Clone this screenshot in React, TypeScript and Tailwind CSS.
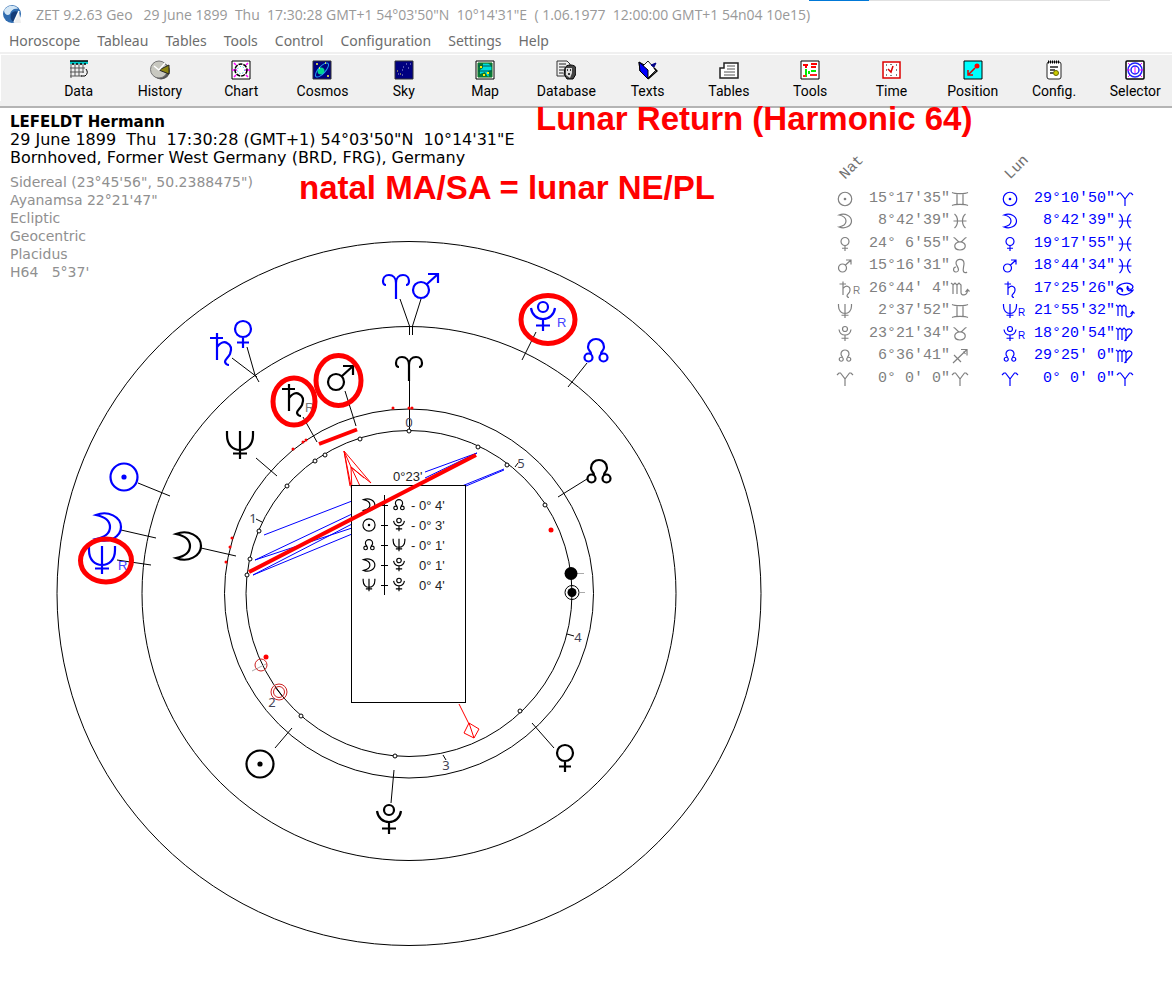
import React from 'react';

type GlyphName =
  | 'sun' | 'moon' | 'venus' | 'mars' | 'saturn' | 'neptune' | 'pluto' | 'node'
  | 'aries' | 'taurus' | 'gemini' | 'cancer' | 'leo' | 'virgo' | 'scorpio' | 'sagittarius' | 'pisces';

// Every glyph is drawn around 0,0 in a box of -14..14
const GLYPHS: Record<GlyphName, React.ReactNode> = {
  sun: (
    <>
      <circle r="13.5" />
      <circle r="1.5" fill="currentColor" />
    </>
  ),
  moon: <path d="M-12 -12C0 -17 13 -10 13 0C13 10 0 17 -12 12C-2 10 2 5 2 0C2 -5 -2 -10 -12 -12Z" />,
  venus: <path d="M0 -13A8 8 0 1 1 0 3A8 8 0 1 1 0 -13ZM0 3V14M-6 8.5H6" />,
  mars: <path d="M-5 -4A8 8 0 1 1 -5 12A8 8 0 1 1 -5 -4ZM1 -2L12 -12M2 -12H12V-3" />,
  saturn: <path d="M-4 -15V12M-11 -10H2M-4 -1C-1 -5 3 -7 6 -5C10 -3 11 1 9 6C7 10 4 11 4 14C5 17 7 17 8 17" />,
  neptune: <path d="M-13 -14V-10C-13 0 -7 5 0 5C7 5 13 0 13 -10V-14M0 -14V14M-7 8.5H7" />,
  pluto: <path d="M0 -15A5 5 0 1 1 0 -5A5 5 0 1 1 0 -15ZM-12 -9C-11 -2 -6 2 0 2C6 2 11 -2 12 -9M0 2V14M-7 8.5H7" />,
  node: (
    <>
      <path d="M-5 3C-5 0 -8 0 -8 -4C-8 -9 -4 -12 0 -12C4 -12 8 -9 8 -4C8 0 5 0 5 3" />
      <circle cx="-7.5" cy="6.5" r="4" />
      <circle cx="7.5" cy="6.5" r="4" />
    </>
  ),
  aries: <path d="M0 12V-4C0 -9 -3 -12 -7 -12C-11 -12 -13 -9 -13 -6C-13 -4 -12 -2 -10 -2M0 -4C0 -9 3 -12 7 -12C11 -12 13 -9 13 -6C13 -4 12 -2 10 -2" />,
  taurus: <path d="M-13 -13C-8 -13 -7 -4 0 -4C7 -4 8 -13 13 -13M0 -4C-14 -4 -14 12 0 12C14 12 14 -4 0 -4" />,
  gemini: <path d="M-16 -13C-10 -10 10 -10 16 -13M-16 13C-10 10 10 10 16 13M-6 -10V10M6 -10V10" />,
  cancer: <path d="M-17 -1C-10 -13 8 -14 14 -8A5 5 0 1 1 6 -6M17 1C10 13 -8 14 -14 8A5 5 0 1 1 -6 6M-6 6A5 5 0 0 0 -14 0M6 -6A5 5 0 0 0 14 2" />,
  leo: <path d="M-8 2A5 5 0 1 0 -3 8C-3 2 -8 -1 -8 -6C-8 -16 8 -16 8 -5C8 1 5 6 7 11C8 14 12 14 14 12" />,
  virgo: <path d="M-18 -12L-14 -9V12M-14 -8L-10 -12L-6 -8V12M-6 -8L-2 -12L2 -8V14M2 -6C8 -14 18 -8 12 -1L-1 14" />,
  scorpio: <path d="M-18 -12L-14 -9V10M-14 -8L-10 -12L-6 -8V10M-6 -8L-2 -12L2 -8V7C2 14 14 14 15 3M11 6L15 1L19 5" />,
  sagittarius: <path d="M-14 14L14 -13M2 -13H14V-1M7 -9L11 -4M-12 -2L2 12" />,
  pisces: <path d="M-11 -14C-3 -8 -3 8 -11 14M11 -14C3 -8 3 8 11 14M-13 0H13" />,
};

// Small Aries is a plain forked shape
const SMALL_ARIES = <path d="M0 14V0L-9 -12H-12L-16 -8M0 0L9 -12H12L16 -8" />;

const SmallGlyph = ({ name }: { name: GlyphName }) => (
  <svg width="18" height="16" viewBox="-18 -16 36 32" fill="none" stroke="currentColor" strokeWidth="2.4" className="shrink-0 overflow-visible">
    {name === 'aries' ? SMALL_ARIES : GLYPHS[name]}
  </svg>
);

const MENU = ['Horoscope', 'Tableau', 'Tables', 'Tools', 'Control', 'Configuration', 'Settings', 'Help'];

const TOOLBAR: { label: string; icon: React.ReactNode }[] = [
  {
    label: 'Data',
    icon: (
      <>
        <path d="M1 1H19V4H1Z" fill="#00c8c8" />
        <path d="M1 1H19M4 3V5M8 3V5M12 3V5M16 3V5" stroke="#000" strokeWidth="1.5" />
        <path d="M2 4V18M6 4V16M10 4V16M14 4V13M1 8H16M1 12H15M1 16H13" stroke="#555" />
        <path d="M17 9Q20 13 16 16H12" stroke="#000" />
      </>
    ),
  },
  {
    label: 'History',
    icon: (
      <>
        <ellipse cx="11" cy="11" rx="9" ry="8.5" fill="#555" stroke="none" />
        <ellipse cx="9" cy="9.5" rx="8.5" ry="8.5" fill="#c8c8c0" stroke="#777" />
        <path d="M9 10L19 5V14Z" fill="#8c8410" stroke="#222" />
        <path d="M4 6L9 10L15 3" stroke="#fff" strokeWidth="1.5" />
      </>
    ),
  },
  {
    label: 'Chart',
    icon: (
      <>
        <path d="M1 1H19V19H1Z" fill="#fff" stroke="#000" />
        <path d="M1 10H6M14 10H19M5 5L3 3M15 5L17 3M5 15L3 17M15 15L17 17" stroke="#f0f" strokeWidth="1.5" />
        <circle cx="10" cy="10" r="6" stroke="#000" strokeWidth="1.5" strokeDasharray="4 1" />
        <circle cx="10" cy="10" r="3.5" stroke="#0cc" strokeDasharray="1 2" />
      </>
    ),
  },
  {
    label: 'Cosmos',
    icon: (
      <>
        <path d="M1 1H19V19H1Z" fill="#000080" stroke="#333" />
        <circle cx="9" cy="11" r="3.5" fill="#00d890" />
        <ellipse cx="10" cy="10" rx="9" ry="3.5" transform="rotate(-48 10 10)" stroke="#20a0f0" />
        <path d="M4 4H6M13 3H14M15 16H17M7 8H8" stroke="#ff4" strokeWidth="1.5" />
      </>
    ),
  },
  {
    label: 'Sky',
    icon: (
      <>
        <path d="M1 1H19V19H1Z" fill="#000080" stroke="#333" />
        <path d="M12 4H13M16 4H17M9 7H10M8 10H9M4 14H5M8 15H9M14 8H15" stroke="#aad" />
        <path d="M3 11H4M6 14H7" stroke="#ee4" />
      </>
    ),
  },
  {
    label: 'Map',
    icon: (
      <>
        <path d="M1 1H19V19H1Z" fill="#fff" stroke="#000" />
        <path d="M3 3H17V17H3Z" fill="#0dd" stroke="#060" />
        <path d="M3 3H8V8L5 10V14L10 12L13 17H3ZM13 3H17V7ZM13 11L17 10V17H14Z" fill="#087838" />
        <path d="M3 6H17M3 11H17" stroke="#055" />
        <path d="M5 7H7M12 13H14M8 15H10" stroke="#fe0" strokeWidth="2" />
      </>
    ),
  },
  {
    label: 'Database',
    icon: (
      <>
        <path d="M1 1H11L14 4V16H1Z" fill="#eee" stroke="#333" />
        <path d="M3 4H10M3 7H9M3 10H8M3 13H7" stroke="#222" />
        <path d="M9 8C10 4 19 4 20 8V14L17 19H11L8 14Z" fill="#444" stroke="#000" />
        <path d="M10 8H16V13L14 18L10 15Z" fill="#ddd" />
        <path d="M11 10H12M14 10H15M12 14H14" stroke="#000" strokeWidth="1.5" />
      </>
    ),
  },
  {
    label: 'Texts',
    icon: (
      <>
        <path d="M1 2L10 7V19L2 11Z" fill="#00f" stroke="#000" />
        <path d="M5 6L10 1L18 10L10 18Z" fill="#fff" stroke="#222" />
        <path d="M1 2L10 10V19L2 11Z" fill="#00f" stroke="#000" />
        <path d="M13 5L18 3L16 7Z" fill="#008" stroke="#008" />
        <path d="M10 19L19 11L16 8" stroke="#000" strokeWidth="1.5" />
      </>
    ),
  },
  {
    label: 'Tables',
    icon: (
      <>
        <path d="M5 3H19V18H1V8H5Z" fill="#fff" stroke="#222" strokeWidth="1.5" />
        <path d="M8 6H16M8 9H16M5 12H16M5 15H16" stroke="#555" />
      </>
    ),
  },
  {
    label: 'Tools',
    icon: (
      <>
        <path d="M1 1H19V19H1Z" fill="#fff" stroke="#000" />
        <path d="M3 5H8M6 4V8M11 4H17M11 7H16" stroke="#f00" strokeWidth="2" />
        <path d="M6 9V17M11 11H16M9 11V14" stroke="#0e0" strokeWidth="2" />
        <path d="M3 16H6M10 15H17" stroke="#f22" strokeWidth="2" />
      </>
    ),
  },
  {
    label: 'Time',
    icon: (
      <>
        <path d="M2 2H19V18H2Z" fill="#fff" stroke="#d00" strokeWidth="1.5" />
        <path d="M10 4V5M10 15V16M5 10H6M15 10H16M5 5H6M15 5H16M5 15H6M15 15H16" stroke="#000" />
        <path d="M7 9L10 12L12 6" stroke="#d00" strokeWidth="1.5" />
      </>
    ),
  },
  {
    label: 'Position',
    icon: (
      <>
        <path d="M1 1H19V19H1Z" fill="#0ff" stroke="#000" />
        <circle cx="14" cy="6" r="2.5" fill="#f00" />
        <path d="M12 8L6 14M5 10V15H10" stroke="#d00" strokeWidth="1.5" />
      </>
    ),
  },
  {
    label: 'Config.',
    icon: (
      <>
        <rect x="3" y="2" width="14" height="17" rx="2" fill="#fff" stroke="#222" />
        <path d="M4 2H16" stroke="#000" strokeWidth="3" strokeDasharray="1 1" />
        <path d="M6 7H14M6 10H11M6 13H9" stroke="#222" strokeWidth="1.5" />
        <circle cx="12" cy="13" r="2.5" fill="#cc0" stroke="#660" />
      </>
    ),
  },
  {
    label: 'Selector',
    icon: (
      <>
        <rect x="1" y="1" width="18" height="18" rx="1" fill="#fff" stroke="#000" strokeWidth="1.5" />
        <path d="M3 3L17 17M17 3L3 17" stroke="#f0f" />
        <circle cx="10" cy="10" r="7" fill="#fff" stroke="#22f" strokeWidth="1.5" />
        <circle cx="10" cy="10" r="4" stroke="#22f" strokeWidth="1.5" />
        <path d="M10 7V13M2 10H5M15 10H18" stroke="#f0f" />
      </>
    ),
  },
];

interface Position {
  planet: GlyphName;
  retro?: boolean;
  value: string;
  sign: GlyphName;
}

const NATAL: Position[] = [
  { planet: 'sun', value: `15°17'35"`, sign: 'gemini' },
  { planet: 'moon', value: ` 8°42'39"`, sign: 'pisces' },
  { planet: 'venus', value: `24° 6'55"`, sign: 'taurus' },
  { planet: 'mars', value: `15°16'31"`, sign: 'leo' },
  { planet: 'saturn', retro: true, value: `26°44' 4"`, sign: 'scorpio' },
  { planet: 'neptune', value: ` 2°37'52"`, sign: 'gemini' },
  { planet: 'pluto', value: `23°21'34"`, sign: 'taurus' },
  { planet: 'node', value: ` 6°36'41"`, sign: 'sagittarius' },
  { planet: 'aries', value: ` 0° 0' 0"`, sign: 'aries' },
];

const LUNAR: Position[] = [
  { planet: 'sun', value: `29°10'50"`, sign: 'aries' },
  { planet: 'moon', value: ` 8°42'39"`, sign: 'pisces' },
  { planet: 'venus', value: `19°17'55"`, sign: 'pisces' },
  { planet: 'mars', value: `18°44'34"`, sign: 'pisces' },
  { planet: 'saturn', value: `17°25'26"`, sign: 'cancer' },
  { planet: 'neptune', retro: true, value: `21°55'32"`, sign: 'scorpio' },
  { planet: 'pluto', retro: true, value: `18°20'54"`, sign: 'virgo' },
  { planet: 'node', value: `29°25' 0"`, sign: 'virgo' },
  { planet: 'aries', value: ` 0° 0' 0"`, sign: 'aries' },
];

interface PositionTableProps {
  title: string;
  rows: Position[];
  color: string;
}

const PositionTable: React.FC<PositionTableProps> = ({ title, rows, color }) => (
  <table className="w-[133px] shrink-0 table-fixed border-collapse font-['Liberation_Mono',monospace] text-[15px] leading-[22px]">
    <colgroup>
      <col className="w-[33px]" />
      <col className="w-[81px]" />
      <col className="w-[19px]" />
    </colgroup>
    <thead>
      <tr>
        <th colSpan={3} className="h-[38px] p-0 pt-2 pl-[3px] text-left align-top font-normal text-[#707070]">
          <span className="inline-block -rotate-45">{title}</span>
        </th>
      </tr>
    </thead>
    <tbody className={color}>
      {rows.map((row) => (
        <tr key={row.planet} className="odd:h-[23px] even:h-[22px]">
          <td className="p-0">
            <div className="flex items-end">
              <SmallGlyph name={row.planet} />
              {row.retro && <span className="-ml-px h-3 font-['Liberation_Sans',sans-serif] text-[10px] leading-3">R</span>}
            </div>
          </td>
          <td className="p-0 whitespace-pre">{row.value}</td>
          <td className="p-0">
            <div className="flex justify-end">
              <SmallGlyph name={row.sign} />
            </div>
          </td>
        </tr>
      ))}
    </tbody>
  </table>
);

const CHART_PLANETS: { name: GlyphName; x: number; y: number; lunar?: boolean }[] = [
  { name: 'aries', x: 396, y: 287, lunar: true },
  { name: 'mars', x: 426, y: 286, lunar: true },
  { name: 'venus', x: 243, y: 334, lunar: true },
  { name: 'saturn', x: 221, y: 348, lunar: true },
  { name: 'sun', x: 124, y: 477, lunar: true },
  { name: 'moon', x: 108, y: 527, lunar: true },
  { name: 'neptune', x: 102, y: 560, lunar: true },
  { name: 'pluto', x: 543, y: 317, lunar: true },
  { name: 'node', x: 596, y: 351, lunar: true },
  { name: 'aries', x: 409, y: 369 },
  { name: 'mars', x: 341, y: 378 },
  { name: 'saturn', x: 293, y: 399 },
  { name: 'neptune', x: 240, y: 445 },
  { name: 'moon', x: 188, y: 546 },
  { name: 'sun', x: 260, y: 764 },
  { name: 'pluto', x: 389, y: 820 },
  { name: 'venus', x: 565, y: 758 },
  { name: 'node', x: 599, y: 472 },
];

const MIDPOINTS = [
  [315, 461], [325, 455], [360, 439], [287, 486], [409, 431], [259, 531], [250, 559], [247, 575],
  [478, 447], [507, 465], [545, 505], [301, 716], [395, 756], [520, 711],
];

const RED_DOTS = [
  [393, 408], [409, 408], [412, 408], [293, 449], [303, 442], [306, 440], [232, 538], [230, 547], [226, 562],
];

const NUMERALS = [
  { n: '0', x: 409, y: 427 },
  { n: '1', x: 253, y: 523 },
  { n: '2', x: 272, y: 707 },
  { n: '3', x: 446, y: 770 },
  { n: '4', x: 578, y: 642 },
  { n: '5', x: 521, y: 468 },
];

const ASPECTS: { a: GlyphName; b: GlyphName; minus?: boolean; orb: string }[] = [
  { a: 'moon', b: 'node', minus: true, orb: `0° 4'` },
  { a: 'sun', b: 'pluto', minus: true, orb: `0° 3'` },
  { a: 'node', b: 'neptune', minus: true, orb: `0° 1'` },
  { a: 'moon', b: 'pluto', orb: `0° 1'` },
  { a: 'neptune', b: 'pluto', orb: `0° 4'` },
];

const HarmonicChart = () => (
  <svg
    viewBox="50 235 720 720"
    fill="none"
    className="col-start-1 row-start-1 mt-[127px] ml-[50px] w-full max-w-[720px] font-['Liberation_Sans',sans-serif]"
  >
    {/* Wheels */}
    <g stroke="#000">
      <circle cx="409" cy="593.5" r="352" />
      <circle cx="409" cy="593.5" r="267" />
      <circle cx="409" cy="593.5" r="184.5" />
      <circle cx="409" cy="593.5" r="163" />
    </g>

    {/* Leader lines */}
    <path
      stroke="#000"
      d="M400 299L409.5 326V335M421 299L412.5 326V335M247 347L255 375L259 382M232 358L257 377M138 483L170 496M121 530L156 538M117 560L151 565M536 332L522 360M587 363L568 387M409.5 381V431M345 391L356 426M303 417L317 442M256 458L277 476M201 548L236 556M275 748L292 728M391 803L394 770M554 748L532 723M587 479L558 497M256 519L262 522M443 755L446 760M567 634L574 636M515 467L518 463M275 687L283 697"
    />
    <path stroke="#aaa" d="M577 573.5H584M580 592.5H585M252 671L266 664" />

    {/* Planets */}
    {CHART_PLANETS.map((p) => (
      <g
        key={`${p.name}-${p.x}`}
        transform={`translate(${p.x} ${p.y})`}
        className={p.lunar ? 'text-[#0000ff]' : 'text-black'}
        stroke="currentColor"
        strokeWidth="2.2"
      >
        {GLYPHS[p.name]}
      </g>
    ))}
    <g fontSize="13">
      <text x="557" y="327" fill="#4444ff">R</text>
      <text x="118" y="570" fill="#4444ff">R</text>
      <text x="305" y="412" fill="#777">R</text>
    </g>

    {/* Points on the inner wheel */}
    {MIDPOINTS.map(([x, y]) => (
      <circle key={`${x}-${y}`} cx={x} cy={y} r="2" fill="#fff" stroke="#000" />
    ))}
    {RED_DOTS.map(([x, y]) => (
      <circle key={`${x}-${y}`} cx={x} cy={y} r="1.5" fill="#f00" />
    ))}
    <circle cx="551" cy="530" r="2.5" fill="#f00" />
    <circle cx="266" cy="657" r="2.5" fill="#f00" />
    <g stroke="#c22">
      <circle cx="261" cy="665" r="6" />
      <circle cx="279" cy="692" r="8" />
      <circle cx="279" cy="692" r="5.5" />
    </g>
    <circle cx="571" cy="573.5" r="6.5" fill="#000" />
    <circle cx="572" cy="592.5" r="4.5" fill="#000" />
    <circle cx="572" cy="592.5" r="7" stroke="#000" />
    <g fontSize="13" textAnchor="middle" fill="#445" className="font-['Noto_Sans',sans-serif]">
      {NUMERALS.map(({ n, x, y }) => (
        <text key={n} x={x} y={y}>{n}</text>
      ))}
    </g>

    {/* Aspect lines */}
    <path
      stroke="#0000ff"
      d="M264 535L352 501M255 560L352 514M255 560L352 528M253 575L352 524M253 575L352 534M425 472L477 453M425 478L477 453M462 486L504 469M466 486L504 470"
    />

    {/* Pointer */}
    <path
      stroke="#ff0000"
      d="M344 451L352 491M344 451L371 483M344 451L350 486M344 451L351 467L371 483M351 467L352 491M351 467L360 486M351 467L364 478M459 704L469 724M469 723L479 729L474 738L464 733ZM469 723L474 738"
    />
    <text x="393" y="481" fontSize="13" fill="#222">0°23'</text>

    {/* Aspect box */}
    <rect x="351.5" y="485.5" width="114" height="217" fill="#fff" stroke="#000" />
    <path stroke="#000" d="M384.5 495V595" />
    {ASPECTS.map((row, i) => (
      <g key={row.a + row.b} transform={`translate(0 ${505 + i * 20})`}>
        <g transform="translate(369 0) scale(0.45)" stroke="#000" strokeWidth="2.6" className="text-black">
          {GLYPHS[row.a]}
        </g>
        <path stroke="#000" d="M381 .5H388" />
        <g transform="translate(399 0) scale(0.45)" stroke="#000" strokeWidth="2.6" className="text-black">
          {GLYPHS[row.b]}
        </g>
        {row.minus && <text x="411" y="5" fontSize="13" fill="#222">-</text>}
        <text x="419" y="5" fontSize="13" fill="#222">{row.orb}</text>
      </g>
    ))}

    {/* Red marks */}
    <g stroke="#ff0000">
      <g strokeWidth="5">
        <ellipse cx="338.5" cy="380.5" rx="22.5" ry="25" />
        <ellipse cx="294" cy="401.5" rx="21" ry="23.5" />
        <ellipse cx="548" cy="319.5" rx="27" ry="24" />
        <ellipse cx="106" cy="560.5" rx="25.5" ry="21.5" />
      </g>
      <path strokeWidth="4" d="M319 444L357 429.5M249 572L476 455" />
    </g>
  </svg>
);

const Globe = () => (
  <svg width="20" height="20" viewBox="0 0 20 20" className="shrink-0">
    <circle cx="10" cy="10" r="9" fill="#2f6cb0" />
    <path d="M2 7C5 0 14 1 16 5C12 4 9 6 8 10C6 12 3 11 2 7Z" fill="#d3e6f5" />
    <path d="M9 10C11 6 16 7 17 9L12 18C9 17 8 14 9 10Z" fill="#143c78" />
    <path d="M17 7L12 19H19Z" fill="#eee" />
    <path d="M17 7L12 18" stroke="#fff" strokeWidth="1.5" />
  </svg>
);

const App: React.FC = () => {
  return (
    <div className="min-h-screen overflow-hidden bg-white">
      {/* Title bar */}
      <header className="relative flex h-[28px] items-center gap-[14px] pl-[2px] font-['Open_Sans',sans-serif] text-[14px] text-[#999]">
        <div className="absolute top-0 left-[69%] flex h-px w-[301px] bg-[#e0e0e0]">
          <div className="w-[60px] bg-[#0078d7]" />
        </div>
        <Globe />
        <h1 className="whitespace-pre">{`ZET 9.2.63 Geo   29 June 1899  Thu  17:30:28 GMT+1 54°03'50"N  10°14'31"E  ( 1.06.1977  12:00:00 GMT+1 54n04 10e15)`}</h1>
      </header>

      {/* Menu */}
      <nav className="flex h-[24px] items-center gap-[17px] pl-[9px] font-['Noto_Sans',sans-serif] text-[14px] text-[#6d6d6d]">
        {MENU.map((item) => (
          <button key={item} type="button">{item}</button>
        ))}
      </nav>

      {/* Toolbar */}
      <div className="h-[56px] border-t-2 border-b-2 border-t-[#f0f0f0] border-b-[#b4b4b4] bg-[#f0f0f0]">
        <div className="-mr-1 flex border-t border-l border-white pl-[37px]">
          {TOOLBAR.map(({ label, icon }) => (
            <button
              key={label}
              type="button"
              className="flex min-w-0 flex-1 flex-col items-center gap-px pt-[5px] font-['Roboto',sans-serif] text-[14px] leading-5 text-black"
            >
              <svg width="20" height="20" viewBox="0 0 20 20" fill="none">{icon}</svg>
              {label}
            </button>
          ))}
        </div>
      </div>

      <main className="relative flex items-start">
        <div className="grid w-[836px] min-w-0 grid-cols-1 items-start">
          <section className="col-start-1 row-start-1 pt-[5px] pl-[10px] font-['DejaVu_Sans',sans-serif] leading-[18px] whitespace-pre">
            <div className="text-[16px] leading-[18px] text-black">
              <h2 className="text-[15px] font-bold">LEFELDT Hermann</h2>
              <p>{`29 June 1899  Thu  17:30:28 (GMT+1) 54°03'50"N  10°14'31"E`}</p>
              <p>Bornhoved, Former West Germany (BRD, FRG), Germany</p>
            </div>
            <div className="mt-[6px] text-[14px] leading-[18px] text-[#909090]">
              <p>{`Sidereal (23°45'56", 50.2388475")`}</p>
              <p>{`Ayanamsa 22°21'47"`}</p>
              <p>Ecliptic</p>
              <p>Geocentric</p>
              <p>Placidus</p>
              <p>{`H64   5°37'`}</p>
            </div>
          </section>
          <HarmonicChart />
        </div>

        <aside className="flex gap-8 pt-[41px]">
          <PositionTable title="Nat" rows={NATAL} color="text-[#808080]" />
          <PositionTable title="Lun" rows={LUNAR} color="text-[#0000ff]" />
        </aside>

        {/* Annotations lie over the chart */}
        <p className="absolute top-[-9px] left-[536px] font-['Liberation_Sans',sans-serif] text-[33px] leading-10 font-bold whitespace-nowrap text-[#ff0000]">
          Lunar Return (Harmonic 64)
        </p>
        <p className="absolute top-[60px] left-[299px] font-['Liberation_Sans',sans-serif] text-[33px] leading-10 font-bold whitespace-nowrap text-[#ff0000]">
          natal MA/SA = lunar NE/PL
        </p>
      </main>
    </div>
  );
};

export default App;
